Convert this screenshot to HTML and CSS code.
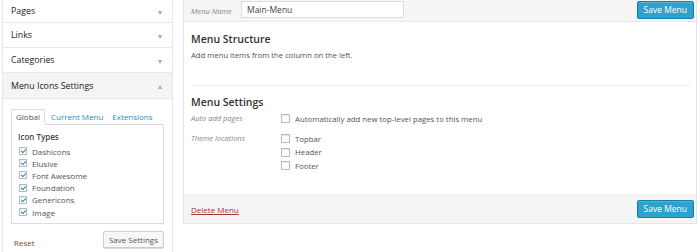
FILE: index.html
```html
<!DOCTYPE html>
<html>
<head>
<meta charset="utf-8">
<link rel="stylesheet" href="styles.css">
</head>
<body>
<div class="page">
  <aside class="sidebar">
    <div class="acc-item first"><span>Pages</span><span class="arrow">&#9662;</span></div>
    <div class="acc-item"><span>Links</span><span class="arrow">&#9662;</span></div>
    <div class="acc-item"><span>Categories</span><span class="arrow">&#9662;</span></div>
    <div class="acc-item open"><span>Menu Icons Settings</span><span class="arrow">&#9652;</span></div>
    <div class="acc-content">
      <div class="tabs">
        <span class="tab active">Global</span>
        <span class="tab">Current Menu</span>
        <span class="tab">Extensions</span>
      </div>
      <div class="tab-panel">
        <div class="panel-title">Icon Types</div>
        <ul class="checks">
          <li><span class="cb checked"></span>Dashicons</li>
          <li><span class="cb checked"></span>Elusive</li>
          <li><span class="cb checked"></span>Font Awesome</li>
          <li><span class="cb checked"></span>Foundation</li>
          <li><span class="cb checked"></span>Genericons</li>
          <li><span class="cb checked"></span>Image</li>
        </ul>
      </div>
      <div class="side-actions">
        <a class="reset">Reset</a>
        <span class="btn-gray">Save Settings</span>
      </div>
    </div>
  </aside>
  <main class="main">
    <div class="main-header">
      <label class="name-label">Menu Name</label>
      <span class="name-input">Main-Menu</span>
      <span class="btn-blue">Save Menu</span>
    </div>
    <div class="main-body">
      <h3 class="h-structure">Menu Structure</h3>
      <p class="hint">Add menu items from the column on the left.</p>
      <div class="divider"></div>
      <h3 class="h-settings">Menu Settings</h3>
      <div class="setting-row">
        <span class="setting-label">Auto add pages</span>
        <div class="setting-opts">
          <div class="opt"><span class="cb"></span>Automatically add new top-level pages to this menu</div>
        </div>
      </div>
      <div class="setting-row second">
        <span class="setting-label">Theme locations</span>
        <div class="setting-opts">
          <div class="opt"><span class="cb"></span>Topbar</div>
          <div class="opt"><span class="cb"></span>Header</div>
          <div class="opt"><span class="cb"></span>Footer</div>
        </div>
      </div>
    </div>
    <div class="main-footer">
      <a class="delete">Delete Menu</a>
      <span class="btn-blue">Save Menu</span>
    </div>
  </main>
</div>
</body>
</html>
```
FILE: styles.css
```css
* { box-sizing: border-box; }
html, body { margin: 0; padding: 0; background: #fff; }
body { font-family: "Open Sans", "DejaVu Sans", sans-serif; color: #444; font-size: 8px; }
.page { display: flex; align-items: flex-start; width: 700px; height: 252px; overflow: hidden; }

.sidebar { width: 171px; margin-left: 2px; border-left: 1px solid #e8e8e8; border-right: 1px solid #e8e8e8; height: 252px; background: #fff; }
.acc-item { height: 25px; display: flex; align-items: center; justify-content: space-between; padding: 0 10px 0 8px; border-bottom: 1px solid #e8e8e8; font-size: 8.8px; font-weight: 400; color: #222; }
.acc-item.first { height: 23px; }
.acc-item.open { background: #f4f4f4; height: 26px; }
.arrow { color: #aaa; font-size: 8px; font-weight: 400; }
.acc-content { padding: 10px 8px 0 8px; }
.tabs { display: flex; align-items: flex-end; height: 15px; padding-left: 0; white-space: nowrap; }
.tab { font-size: 8px; color: #2b8dbd; padding: 0 4px; line-height: 14px; margin-right: 1px; white-space: nowrap; }
.tab.active { color: #555; background: #fff; border: 1px solid #ddd; border-bottom-color: #fff; position: relative; top: 1px; padding: 0 4px; margin-right: 2px; }
.tab-panel { border: 1px solid #ddd; height: 100px; margin-left: 0; padding: 6px 6px 5px; }
.panel-title { font-size: 8px; font-weight: 600; color: #444; line-height: 12px; margin-bottom: 2px; }
.checks { list-style: none; margin: 0; padding: 0; }
.checks li { display: flex; align-items: center; height: 12.2px; font-size: 8px; color: #555; }
.cb { display: inline-block; width: 8px; height: 8px; border: 1px solid #bbb; background: #fff; box-shadow: inset 0 1px 1px rgba(0,0,0,.08); margin-right: 5px; position: relative; flex: none; }
.checks .cb { margin-left: 1px; }
.cb.checked::after { content: ""; position: absolute; left: 2px; top: 0px; width: 2px; height: 4px; border: solid #1e8cbe; border-width: 0 1.5px 1.5px 0; transform: rotate(45deg); }
.side-actions { display: flex; justify-content: space-between; align-items: center; margin-top: 7px; padding-left: 3px; }
.reset { color: #a33; font-size: 8px; margin-top: 5px; }
.btn-gray { display: inline-block; border: 1px solid #ccc; background: #f7f7f7; color: #555; font-size: 8px; padding: 0 5px; line-height: 15px; border-radius: 2px; box-shadow: 0 1px 0 #ddd; }

.main { margin-left: 10px; width: 514px; border: 1px solid #e5e5e5; border-top: none; background: #fff; display: flex; flex-direction: column; }
.main-header { height: 22px; background: #f5f5f5; border-bottom: 1px solid #e8e8e8; display: flex; align-items: center; padding: 0 2px 0 7px; }
.name-label { font-style: italic; color: #888; font-size: 7.6px; width: 50px; }
.name-input { width: 163px; height: 17px; margin-top: -2px; border: 1px solid #ddd; background: #fff; font-size: 8.5px; color: #444; padding: 0 5px; line-height: 15px; }
.btn-blue { margin-left: auto; display: inline-block; background: #2ea2cc; border: 1px solid #0f7fae; color: #fff; font-size: 8.5px; line-height: 16px; padding: 0 6px; border-radius: 2px; box-shadow: inset 0 1px 0 rgba(120,200,230,.5); }
.main-header .btn-blue { margin-top: -2px; }
.main-body { height: 172px; padding: 0 6px 0 7px; }
.h-structure, .h-settings { margin: 0; font-size: 10.5px; font-weight: 600; color: #333; line-height: 14px; }
.h-structure { padding-top: 10px; }
.hint { margin: 4px 0 0; font-size: 7.7px; color: #555; line-height: 11px; }
.divider { border-top: 1px solid #eee; margin-top: 24px; }
.h-settings { margin-top: 9px; }
.setting-row { display: flex; margin-top: 3px; }
.setting-row.second { margin-top: 6px; }
.setting-label { width: 90px; font-style: italic; color: #888; font-size: 7.5px; line-height: 13.5px; }
.setting-opts { display: flex; flex-direction: column; }
.opt { display: flex; align-items: center; height: 13.7px; font-size: 7.8px; color: #555; }
.opt .cb { width: 9px; height: 9px; }
.main-footer { height: 29px; background: #f5f5f5; border-top: 1px solid #eee; display: flex; align-items: center; padding: 0 2px 0 7px; }
.delete { color: #a33; text-decoration: underline; font-size: 8px; }
```
